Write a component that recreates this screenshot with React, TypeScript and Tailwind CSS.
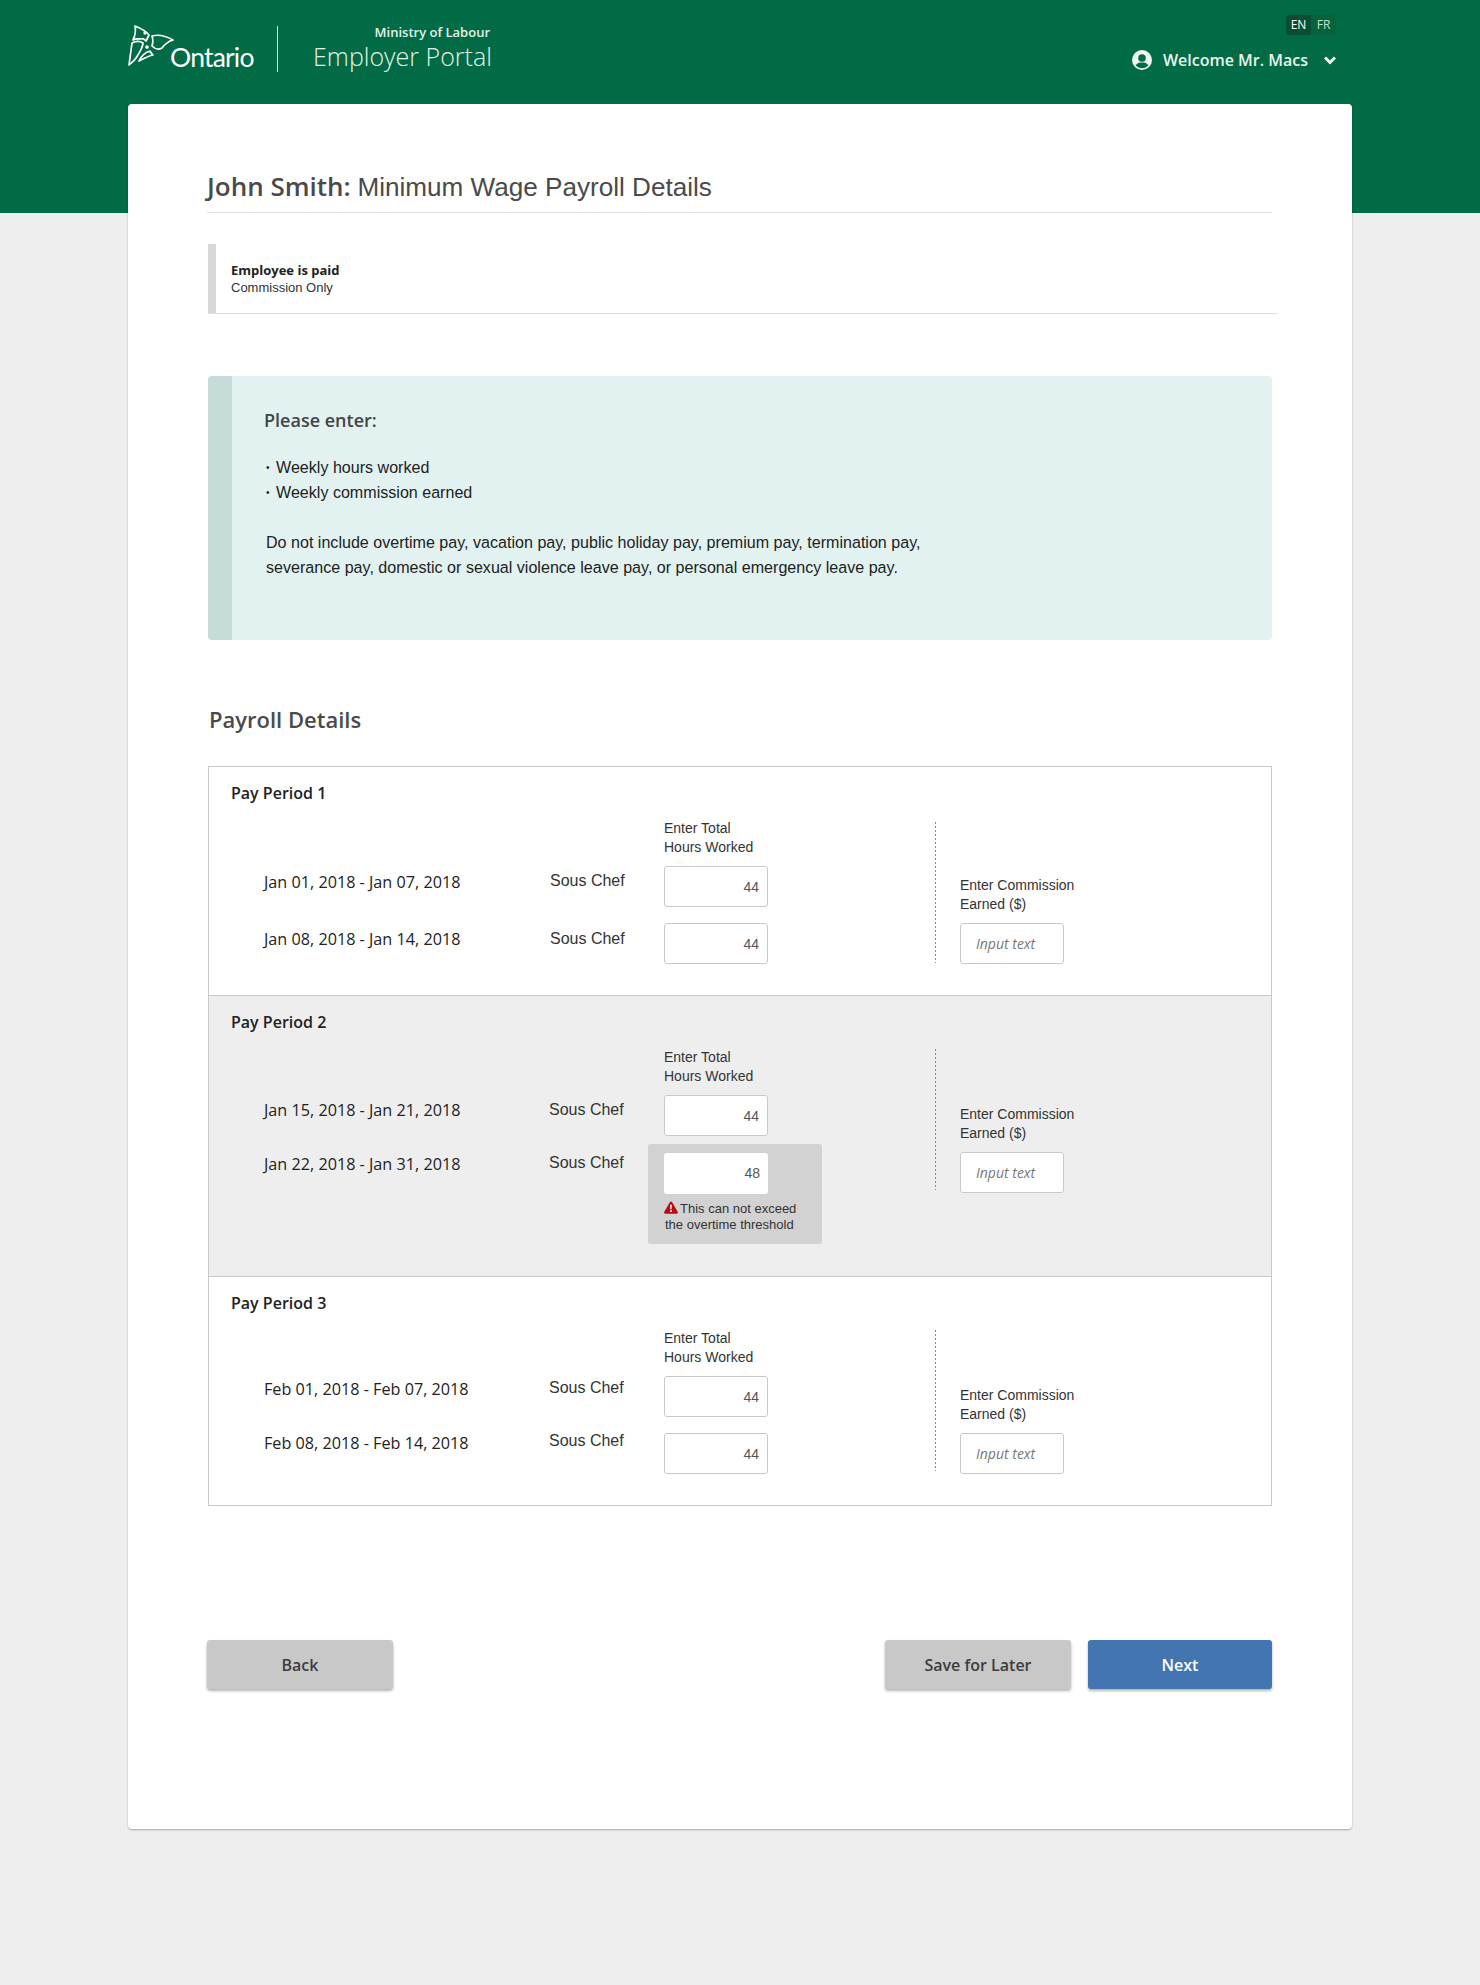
const openSans = 'font-["Open_Sans",sans-serif]'

function Trillium() {
  return (
    <svg width="46" height="42" viewBox="0 0 46 42" fill="none" stroke="white" strokeWidth="1.7" strokeLinejoin="round" strokeLinecap="round">
      <path d="M7 1C12 3 17 5 21 10C20 12 19 14 18 16C16 14 15 13 14 14C11 14 8 13 5 15C7 11 8 6 7 1Z" />
      <path d="M24 11C31 9 38 11 45 15C41 16 37 19 34 23C31 25 27 24 24 21C25 18 25 14 24 11Z" />
      <path d="M4 18C8 16 12 16 15 18C15 22 12 27 8 33C6 36 3 38 1 40C2 33 3 25 4 18Z" />
      <path d="M11 36C14 30 18 27 22 26C23 28 24 29 25 30C20 31 15 34 11 36Z" />
      <circle cx="19" cy="22" r="1" fill="white" />
      <circle cx="17" cy="8" r="0.8" fill="white" />
    </svg>
  )
}

function TextInput({ value, bordered = true }: { value: string; bordered?: boolean }) {
  return (
    <div className={`flex h-[41px] w-[104px] items-center justify-end rounded-[3px] bg-white pr-2 font-["Liberation_Sans",sans-serif] text-[14px] text-[#555] ${bordered ? 'border border-[#c9c9c9] pt-[2px]' : 'text-[#444]'}`}>
      {value}
    </div>
  )
}

type Row = { dates: string; input: string; dateClass: string; jobClass: string; error?: boolean }
type Period = { title: string; dateWidth: string; jobWidth: string; padBottom: string; rows: Row[]; shaded?: boolean }

const periods: Period[] = [
  {
    title: 'Pay Period 1',
    dateWidth: 'w-[286px]',
    jobWidth: 'w-[114px]',
    padBottom: 'pb-[31px]',
    rows: [
      { dates: 'Jan 01, 2018 - Jan 07, 2018', input: '44', dateClass: 'mt-[6px]', jobClass: 'mt-[5px]' },
      { dates: 'Jan 08, 2018 - Jan 14, 2018', input: '44', dateClass: 'mt-[6px]', jobClass: 'mt-[6px]' },
    ],
  },
  {
    title: 'Pay Period 2',
    dateWidth: 'w-[285px]',
    jobWidth: 'w-[115px]',
    padBottom: 'pb-[32px]',
    shaded: true,
    rows: [
      { dates: 'Jan 15, 2018 - Jan 21, 2018', input: '44', dateClass: 'mt-[5px]', jobClass: 'mt-[5px]' },
      { dates: 'Jan 22, 2018 - Jan 31, 2018', input: '48', dateClass: 'mt-[10px]', jobClass: 'mt-[9px]', error: true },
    ],
  },
  {
    title: 'Pay Period 3',
    dateWidth: 'w-[285px]',
    jobWidth: 'w-[115px]',
    padBottom: 'pb-[31px]',
    rows: [
      { dates: 'Feb 01, 2018 - Feb 07, 2018', input: '44', dateClass: 'mt-[3px]', jobClass: 'mt-[2px]' },
      { dates: 'Feb 08, 2018 - Feb 14, 2018', input: '44', dateClass: 'mt-0', jobClass: '-mt-[2px]' },
    ],
  },
]

function PayPeriod({ period, first }: { period: Period; first: boolean }) {
  return (
    <div className={`flex ${first ? '' : 'border-t border-[#c9c9c9]'} ${period.shaded ? 'bg-[#eeeeee]' : 'bg-white'}`}>
      <div className={`w-[726px] pt-[16px] ${period.padBottom}`}>
        <div className={`${openSans} ml-[22px] text-[16px] leading-[20px] font-semibold text-[#222]`}>{period.title}</div>
        <div className="mt-[16px] ml-[455px] font-['Liberation_Sans',sans-serif] text-[14px] leading-[19px] text-[#333]">
          Enter Total
          <br />
          Hours Worked
        </div>
        <div className="mt-[9px] flex flex-col gap-4">
          {period.rows.map((row) => (
            <div key={row.dates} className={`ml-[55px] flex items-start ${row.error ? '-mt-2' : ''}`}>
              <div className={`${period.dateWidth} ${row.dateClass} ${openSans} text-[16.2px] leading-[20px] font-medium text-[#222]`}>{row.dates}</div>
              <div className={`${period.jobWidth} ${row.jobClass} font-['Liberation_Sans',sans-serif] text-[16px] leading-[20px] text-[#333]`}>Sous Chef</div>
              {row.error ? (
                <div className="-ml-[16px] h-[100px] w-[174px] rounded-[3px] bg-[#d2d2d2] pt-[9px] pl-[16px]">
                  <TextInput value={row.input} bordered={false} />
                  <div className="mt-[7px] font-['Liberation_Sans',sans-serif] text-[13px] leading-[16px] text-[#333]">
                    <svg className="mr-[2px] inline-block align-[-1px]" width="14" height="13" viewBox="0 0 13 12">
                      <path d="M6.500 0.500c.5 0 .9.3 1.200.8l5 8.600c.5.900-.1 1.800-1 1.800H1.300c-1 0-1.600-.9-1-1.800l5-8.600c.3-.5.7-.8 1.200-.8z" fill="#b50d12" />
                      <path d="M5.700 3.500h1.600l-.2 4.200H5.900z" fill="white" />
                      <circle cx="6.500" cy="9.300" r="0.900" fill="white" />
                    </svg>
                    This can not exceed
                    <br />
                    <span className="ml-px">the overtime threshold</span>
                  </div>
                </div>
              ) : (
                <TextInput value={row.input} />
              )}
            </div>
          ))}
        </div>
      </div>
      {/* dotted divider */}
      <div className={`${first ? 'mt-[55px]' : 'mt-[53px]'} h-[141px] w-px bg-[linear-gradient(#8a8a8a_50%,transparent_50%)] bg-[length:1px_4px]`} />
      <div className="mt-[109px] ml-[24px]">
        <div className="font-['Liberation_Sans',sans-serif] text-[14px] leading-[19px] text-[#333]">
          Enter Commission
          <br />
          Earned ($)
        </div>
        <div className={`${openSans} mt-[9px] flex h-[41px] w-[104px] items-center rounded-[3px] border border-[#c9c9c9] bg-white pl-[15px] text-[14px] text-[#777] italic`}>
          Input text
        </div>
      </div>
    </div>
  )
}

function FooterButton({ label, primary }: { label: string; primary?: boolean }) {
  return (
    <button className={`${openSans} h-[49px] rounded-[3px] text-[16px] font-semibold shadow-[0_2px_3px_rgba(0,0,0,0.3)] ${primary ? 'w-[184px] bg-[#4376b0] text-white' : 'w-[186px] bg-[#c8c8c8] text-[#3d3d3d]'}`}>
      {label}
    </button>
  )
}

export default function App() {
  return (
    <div className="min-h-[1985px] bg-[#eeeeee] antialiased">
      {/* Header */}
      <header className="h-[213px] bg-[#016b45]">
        <div className="mx-auto flex w-[1224px] items-start justify-between">
          <div className="flex items-start pt-[25px]">
            <Trillium />
            <span className="mt-[15px] -ml-[4px] w-[85px] font-['Lato',sans-serif] text-[26.5px] leading-[34px] tracking-[-0.8px] whitespace-nowrap text-white">Ontario</span>
            <div className="mt-px ml-[22px] h-[46px] w-px bg-[#d5e8dd]" />
            <div className={`${openSans} -mt-px ml-[35px] w-[177px] text-right whitespace-nowrap text-[#e6f2ea]`}>
              <div className="text-[13px] leading-[16px] font-semibold">Ministry of Labour</div>
              <div className="text-[25px] leading-[32px] font-light">Employer Portal</div>
            </div>
          </div>
          <div className={`${openSans} mr-[16px] flex flex-col items-end pt-[15px]`}>
            <div className="flex h-5 overflow-hidden rounded-[3px] bg-[#08623e] text-[12px] leading-5">
              <span className="w-[25px] bg-[#0a4d32] text-center text-white">EN</span>
              <span className="w-[25px] text-center text-[#bfe3c9]">FR</span>
            </div>
            <div className="mt-[15px] flex h-5 items-center text-[#e9f5ee]">
              <svg width="20" height="20" viewBox="0 0 20 20">
                <circle cx="10" cy="10" r="10" fill="#eef7f1" />
                <circle cx="10" cy="8" r="3.800" fill="#016b45" />
                <path d="M3.600 15.200C5 12.900 7.300 12.400 10 12.400s5 .5 6.400 2.800C14.800 17 12.500 18.200 10 18.200S5.200 17 3.600 15.200z" fill="#016b45" />
              </svg>
              <span className="ml-[11px] text-[16px] font-semibold">Welcome Mr. Macs</span>
              <svg className="mt-px ml-[16px]" width="12" height="9" viewBox="0 0 12 9" fill="none" stroke="#f2f9f4" strokeWidth="3">
                <path d="M1 1.500l5 5 5-5" />
              </svg>
            </div>
          </div>
        </div>
      </header>

      {/* Card */}
      <main className="mx-auto -mt-[109px] h-[1725px] w-[1224px] rounded-[4px] bg-white px-[80px] shadow-[0_1px_2px_rgba(0,0,0,0.3)]">
        <div className="-ml-[1px] flex h-[109px] items-end border-b border-[#e0e0e0] pb-[7px]">
          <h1 className="text-[26px] leading-[36px] text-[#4a4a4a]">
            <span className={`${openSans} font-semibold`}>John Smith:</span>{' '}
            <span className="font-['Liberation_Sans',sans-serif] text-[26.1px]">Minimum Wage Payroll Details</span>
          </h1>
        </div>

        <div className="mt-[31px] flex h-[70px] w-[1070px] items-center border-b border-[#e0e0e0]">
          <div className="h-full w-2 bg-[#d8d8d8]" />
          <div className="ml-[15px]">
            <div className={`${openSans} text-[13px] leading-[17px] font-bold text-[#222]`}>Employee is paid</div>
            <div className="mt-px font-['Liberation_Sans',sans-serif] text-[13px] leading-[16px] text-[#333]">Commission Only</div>
          </div>
        </div>

        {/* Notice */}
        <div className="mt-[62px] flex h-[264px] overflow-hidden rounded-[4px] bg-[#e1f2f0]">
          <div className="w-6 bg-[#c6dcd9]" />
          <div className="pt-[32px] pl-[32px] font-['Liberation_Sans',sans-serif] text-[16.08px] leading-[25px] text-[#222]">
            <div className={`${openSans} text-[18px] leading-6 font-semibold text-[#444]`}>Please enter:</div>
            <ul className="mt-[23px] ml-[2px]">
              <li className="flex items-center"><span className="w-[10px] text-[10px]">•</span>Weekly hours worked</li>
              <li className="flex items-center"><span className="w-[10px] text-[10px]">•</span>Weekly commission earned</li>
            </ul>
            <p className="mt-[25px] ml-[2px]">
              Do not include overtime pay, vacation pay, public holiday pay, premium pay, termination pay,
              <br />
              severance pay, domestic or sexual violence leave pay, or personal emergency leave pay.
            </p>
          </div>
        </div>

        <h2 className={`${openSans} mt-[63px] ml-px text-[22px] leading-[32px] font-semibold text-[#4a4a4a]`}>Payroll Details</h2>

        <div className="mt-[31px] border border-[#c9c9c9]">
          {periods.map((period, i) => (
            <PayPeriod key={period.title} period={period} first={i === 0} />
          ))}
        </div>

        <div className="-ml-px mt-[134px] flex items-center">
          <FooterButton label="Back" />
          <div className="ml-auto flex gap-[17px]">
            <FooterButton label="Save for Later" />
            <FooterButton label="Next" primary />
          </div>
        </div>
      </main>
    </div>
  )
}
